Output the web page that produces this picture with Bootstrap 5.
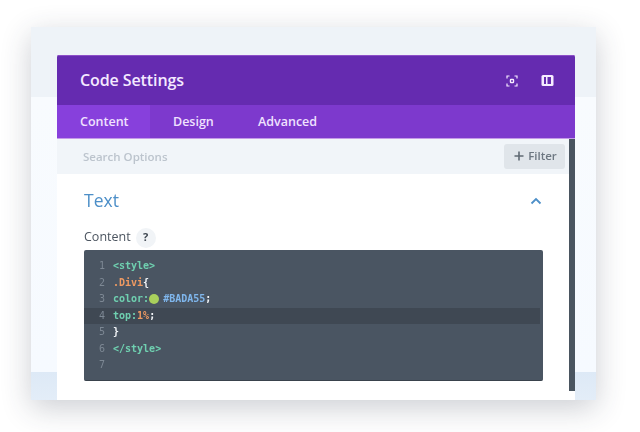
<!DOCTYPE html>
<html lang="en"><head><meta charset="utf-8"><title>Code Settings</title>
<link href="https://cdn.jsdelivr.net/npm/bootstrap@5.3.0/dist/css/bootstrap.min.css" rel="stylesheet">
<style>
html,body{width:640px;height:432px;overflow:hidden;background:#fff}
body{font-family:"Open Sans",sans-serif;padding:27px 44px 32px 31px}
.shot{width:565px;height:373px;padding:28px 21px 0 26px;box-shadow:0 8px 28px rgba(40,50,70,.24);filter:blur(.35px);
background:linear-gradient(#eef3f8 0,#eef3f8 70px,#f8fbfe 70px,#f6faff 345px,#dde9f6 345px,#e3edf8 373px)}
.modalx{width:518px;height:345px;display:flex;flex-direction:column;background:#fff;overflow:hidden;border-radius:2px 2px 0 0}
.headx{height:50px;background:#652bb0;color:#f4e9ff;padding:0 21px 0 23px;border-top:1px solid #8d4fc8}
.headx h1{font-size:16px;font-weight:600;margin:0;letter-spacing:-.1px}
.tabsx{height:34px;background:#7d39cd;border-bottom:1px solid #c49ae8}
.tabx{font-size:12.5px;font-weight:600;color:#f0e2ff;padding:2px 0 0 23px;display:flex;align-items:center}
.tabx.on{background:#8740dc;width:93px}
.tab2{width:85px}
.bodyx{flex:1;min-height:0;position:relative;padding-right:6px}
.barx{position:absolute;right:0;top:0;width:6px;height:252px;background:#4a5560}
.searchx{height:35px;background:#f1f5f9;padding:0 4px 0 26px}
.searchx span.ph{font-size:11.5px;font-weight:600;color:#bcc4cd}
.filterx{width:61px;height:25px;background:#e0e5ea;border-radius:3px;color:#6c7680;font-size:11.5px;font-weight:600;margin-top:-1px;padding-left:2px}
.sect{padding:14px 27px 0}
.ttl{color:#4d8fc8;font-size:17.5px;line-height:25px;font-weight:400}
.lbl{margin-top:12px;height:25px;font-size:12.5px;font-weight:500;color:#4c5560}
.qq{width:20px;height:20px;border-radius:50%;background:#f1f4f7;font-size:11px;font-weight:700;color:#3f4852;margin-left:5px}
.editor{width:459px;height:131px;background:#4a5562;border-radius:2px;border-bottom:1px solid #39424c;padding-top:8px;
font-family:"DejaVu Sans Mono",monospace;font-size:10px;font-weight:700}
.ln{height:16.5px;line-height:16.5px;display:flex}
.ln.cur{background:#3f4853;margin-right:3px}
.no{width:22px;text-align:right;color:#7d8894;font-weight:400;padding-right:1px;margin-right:7px}
.g{color:#6fd0b0}.o{color:#ef9a62}.b{color:#7fb6ec}.w{color:#f2f5f8}
.dot{display:inline-block;width:10px;height:10px;border-radius:50%;background:#a9d05c;margin:0 4px 0 0;align-self:center}
.tog{margin-left:23px}
</style></head><body>
<div class="shot"><div class="modalx">
<div class="headx d-flex align-items-center justify-content-between"><h1>Code Settings</h1>
<div class="d-flex align-items-center">
<svg width="12" height="12" viewBox="0 0 12 12" fill="none" stroke="#f6ecff" stroke-width="1.2"><path d="M1 3.500V1h2.500M8.500 1H11v2.500M11 8.500V11H8.500M3.500 11H1V8.500"/><rect x="3.800" y="3.800" width="4.400" height="4.400" rx="1.200" fill="#f6ecff" stroke="none"/><circle cx="6" cy="6" r="1" fill="#652bb0" stroke="none"/></svg>
<svg class="tog" width="13" height="13" viewBox="0 0 13 13"><rect x=".5" y="1" width="12" height="11" rx="1.500" fill="#f6ecff"/><rect x="3" y="3" width="2" height="7" fill="#652bb0"/><rect x="6.500" y="3" width="3.500" height="7" fill="#652bb0"/></svg>
</div></div>
<div class="tabsx d-flex"><div class="tabx on">Content</div><div class="tabx tab2">Design</div><div class="tabx">Advanced</div></div>
<div class="bodyx"><div class="barx"></div>
<div class="searchx d-flex align-items-center justify-content-between"><span class="ph">Search Options</span>
<div class="filterx d-flex align-items-center justify-content-center gap-1"><svg width="10" height="10" viewBox="0 0 10 10" stroke="#5f6973" stroke-width="1.6"><path d="M5 .5v9M.5 5h9"/></svg>Filter</div></div>
<div class="sect">
<div class="ttl d-flex align-items-center justify-content-between"><span>Text</span>
<svg width="12" height="8" viewBox="0 0 12 8" fill="none" stroke="#4d8fc8" stroke-width="1.8"><path d="M1.500 6.500 6 2l4.500 4.500"/></svg></div>
<div class="lbl d-flex align-items-center"><span>Content</span><span class="qq d-flex align-items-center justify-content-center">?</span></div>
<div class="editor">
<div class="ln"><span class="no">1</span><span class="g">&lt;style&gt;</span></div>
<div class="ln"><span class="no">2</span><span class="o">.Divi</span><span class="w">{</span></div>
<div class="ln"><span class="no">3</span><span class="g">color:</span><span class="dot"></span><span class="b">#BADA55</span><span class="w">;</span></div>
<div class="ln cur"><span class="no">4</span><span class="g">top:</span><span class="o">1%</span><span class="w">;</span></div>
<div class="ln"><span class="no">5</span><span class="w">}</span></div>
<div class="ln"><span class="no">6</span><span class="g">&lt;/style&gt;</span></div>
<div class="ln"><span class="no">7</span></div>
</div></div></div>
</div></div>
<script src="https://cdn.jsdelivr.net/npm/bootstrap@5.3.0/dist/js/bootstrap.bundle.min.js"></script>
</body></html>
